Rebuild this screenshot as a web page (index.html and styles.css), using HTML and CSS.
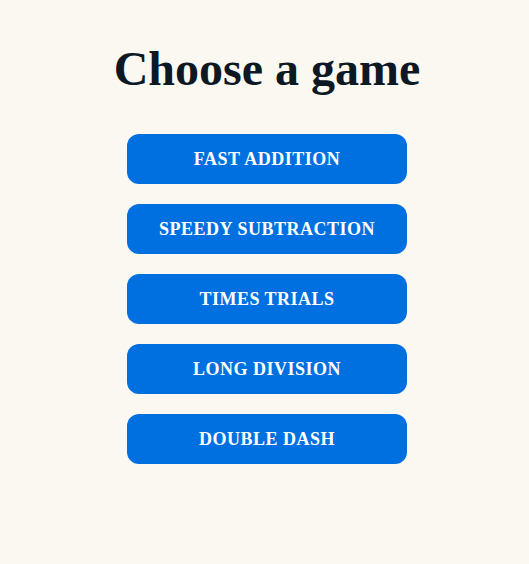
FILE: index.html
```html
<!DOCTYPE html>
<html>
<head>
<meta charset="utf-8">
<link rel="stylesheet" href="styles.css">
</head>
<body>
<main class="menu">
  <h1 class="title">Choose a game</h1>
  <div class="games">
    <button class="game">FAST ADDITION</button>
    <button class="game">SPEEDY SUBTRACTION</button>
    <button class="game">TIMES TRIALS</button>
    <button class="game">LONG DIVISION</button>
    <button class="game">DOUBLE DASH</button>
  </div>
</main>
</body>
</html>
```
FILE: styles.css
```css
html, body {
  margin: 0;
  padding: 0;
  background: #fbf8f2;
  height: 100%;
}
body {
  font-family: "Liberation Serif", "Times New Roman", serif;
}
.menu {
  display: flex;
  flex-direction: column;
  align-items: center;
  padding-top: 40px;
  padding-left: 5px;
}
.title {
  margin: 0;
  font-size: 48px;
  line-height: 58px;
  font-weight: bold;
  color: #0c1824;
}
.games {
  display: flex;
  flex-direction: column;
  gap: 20px;
  margin-top: 36px;
}
.game {
  width: 280px;
  height: 50px;
  border: none;
  border-radius: 12px;
  background: #0070e0;
  color: #ffffff;
  font-family: "Liberation Serif", "Times New Roman", serif;
  font-weight: bold;
  font-size: 18px;
  letter-spacing: 0.5px;
  padding: 0;
}
```
